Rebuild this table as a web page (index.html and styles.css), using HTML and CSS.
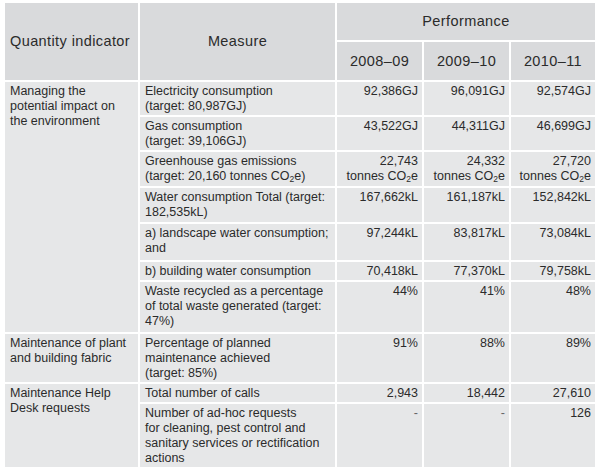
FILE: index.html
```html
<!DOCTYPE html>
<html>
<head>
<meta charset="utf-8">
<link rel="stylesheet" href="styles.css">
</head>
<body>
<table class="perf">
  <colgroup>
    <col class="c-ind">
    <col class="c-meas">
    <col class="c-yr">
    <col class="c-yr">
    <col class="c-yr3">
  </colgroup>
  <thead>
    <tr class="h1">
      <th rowspan="2" class="th-left">Quantity indicator</th>
      <th rowspan="2">Measure</th>
      <th colspan="3">Performance</th>
    </tr>
    <tr class="h2">
      <th>2008–09</th>
      <th>2009–10</th>
      <th>2010–11</th>
    </tr>
  </thead>
  <tbody>
    <tr class="r31">
      <td rowspan="7">Managing the<br>potential impact on<br>the environment</td>
      <td>Electricity consumption<br>(target: 80,987GJ)</td>
      <td class="num">92,386GJ</td>
      <td class="num">96,091GJ</td>
      <td class="num">92,574GJ</td>
    </tr>
    <tr class="r33">
      <td>Gas consumption<br>(target: 39,106GJ)</td>
      <td class="num">43,522GJ</td>
      <td class="num">44,311GJ</td>
      <td class="num">46,699GJ</td>
    </tr>
    <tr class="r34">
      <td>Greenhouse gas emissions<br>(target: 20,160 tonnes CO<sub>2</sub>e)</td>
      <td class="num">22,743<br>tonnes CO<sub>2</sub>e</td>
      <td class="num">24,332<br>tonnes CO<sub>2</sub>e</td>
      <td class="num">27,720<br>tonnes CO<sub>2</sub>e</td>
    </tr>
    <tr class="r34">
      <td>Water consumption Total (target:<br>182,535kL)</td>
      <td class="num">167,662kL</td>
      <td class="num">161,187kL</td>
      <td class="num">152,842kL</td>
    </tr>
    <tr class="r36">
      <td>a) landscape water consumption;<br>and</td>
      <td class="num">97,244kL</td>
      <td class="num">83,817kL</td>
      <td class="num">73,084kL</td>
    </tr>
    <tr class="r18">
      <td>b) building water consumption</td>
      <td class="num">70,418kL</td>
      <td class="num">77,370kL</td>
      <td class="num">79,758kL</td>
    </tr>
    <tr class="r50">
      <td>Waste recycled as a percentage<br>of total waste generated (target:<br>47%)</td>
      <td class="num">44%</td>
      <td class="num">41%</td>
      <td class="num">48%</td>
    </tr>
    <tr class="r47">
      <td>Maintenance of plant<br>and building fabric</td>
      <td>Percentage of planned<br>maintenance achieved<br>(target: 85%)</td>
      <td class="num">91%</td>
      <td class="num">88%</td>
      <td class="num">89%</td>
    </tr>
    <tr class="r18">
      <td rowspan="2">Maintenance Help<br>Desk requests</td>
      <td>Total number of calls</td>
      <td class="num">2,943</td>
      <td class="num">18,442</td>
      <td class="num">27,610</td>
    </tr>
    <tr class="r63">
      <td>Number of ad-hoc requests<br>for cleaning, pest control and<br>sanitary services or rectification<br>actions</td>
      <td class="num dash">-</td>
      <td class="num dash">-</td>
      <td class="num">126</td>
    </tr>
  </tbody>
</table>
</body>
</html>
```

FILE: styles.css
```css
html, body {
  margin: 0;
  padding: 0;
  background: #ffffff;
}

body {
  font-family: "Liberation Sans", Arial, sans-serif;
  color: #2b2b2b;
}

.perf {
  margin: 1px 0 0 3px;
  border-collapse: separate;
  border-spacing: 2px;
  table-layout: fixed;
  width: 594px;
}

.c-ind { width: 133px; }
.c-meas { width: 195px; }
.c-yr { width: 85px; }
.c-yr3 { width: 84px; }

.perf th {
  background: #d9dadc;
  font-weight: normal;
  font-size: 14.5px;
  letter-spacing: 0.4px;
  text-align: center;
  vertical-align: middle;
  padding: 0 5px;
  line-height: 17px;
}

.perf th.th-left {
  text-align: left;
}

.h1 { height: 37px; }
.h2 { height: 38px; }

.r18 { height: 18px; }
.r31 { height: 31px; }
.r33 { height: 33px; }
.r34 { height: 34px; }
.r36 { height: 36px; }
.r47 { height: 47px; }
.r50 { height: 50px; }
.r63 { height: 63px; }

.perf td {
  background: #e6e7e8;
  font-size: 12.5px;
  line-height: 15px;
  vertical-align: top;
  padding: 2px 4px 1px 5px;
  text-align: left;
  overflow: hidden;
  white-space: nowrap;
}

.perf td.num {
  text-align: right;
}

.perf td.dash {
  color: #666;
}

sub {
  font-size: 8.5px;
  line-height: 0;
  vertical-align: -2px;
}
```
